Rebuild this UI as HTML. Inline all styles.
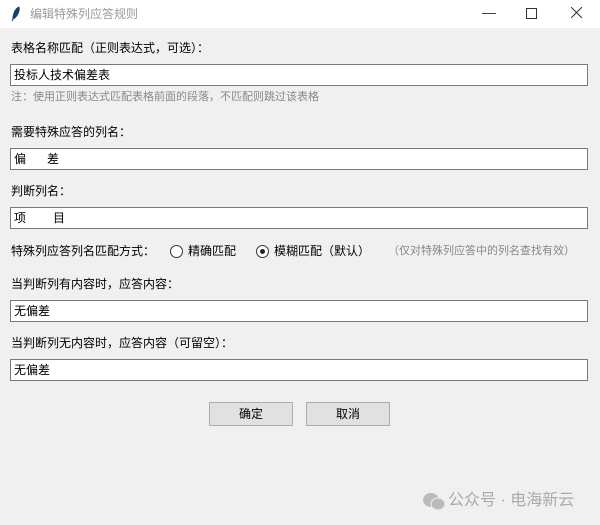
<!DOCTYPE html><html><head><meta charset="utf-8"><style>
body{margin:0;width:600px;height:525px;background:#f0f0f0;font-family:"Liberation Sans","Noto Sans CJK SC",sans-serif;font-size:12px;color:#000;position:relative;overflow:hidden}
.a{position:absolute;white-space:pre;line-height:16px}
.e{position:absolute;left:10px;width:578px;height:22px;background:#fff;border:1px solid #7a7a7a;box-sizing:border-box}
.e span{position:absolute;left:3px;top:2px;line-height:16px;white-space:pre}
.b{position:absolute;top:402px;width:84px;height:24px;box-sizing:border-box;border:1px solid #adadad;background:#e1e1e1;text-align:center;line-height:22px}
.r{position:absolute;width:13px;height:13px;border:1px solid #333;border-radius:50%;box-sizing:border-box;background:#fff}
</style></head><body>
<div style="position:absolute;left:0;top:0;width:600px;height:28px;background:#fff"></div>
<svg style="position:absolute;left:11px;top:6px" width="10" height="16" viewBox="0 0 10 16"><path d="M8 1C4 3 2 8 2 13L1 15M8 1C9 5 6 11 2 13" fill="#1a3f6e" stroke="#1a3f6e" stroke-width="1"/></svg>
<div class="a" style="left:30px;top:6px;color:#999;font-size:12px">编辑特殊列应答规则</div>
<div class="a" style="left:482px;top:4px;color:#333;font-size:14px">—</div>
<div style="position:absolute;left:526px;top:8px;width:9px;height:9px;border:1px solid #333"></div>
<svg style="position:absolute;left:571px;top:7px" width="11" height="11" viewBox="0 0 11 11"><path d="M0 0L11 11M11 0L0 11" stroke="#333" stroke-width="1"/></svg>
<div class="a" style="left:11px;top:40px">表格名称匹配（正则表达式，可选）：</div>
<div class="e" style="top:64px"><span>投标人技术偏差表</span></div>
<div class="a" style="left:11px;top:89px;color:#888;font-size:11px">注：使用正则表达式匹配表格前面的段落，不匹配则跳过该表格</div>
<div class="a" style="left:11px;top:124px">需要特殊应答的列名：</div>
<div class="e" style="top:148px"><span>偏<span style="position:static;display:inline-block;width:21px"></span>差</span></div>
<div class="a" style="left:11px;top:183px">判断列名：</div>
<div class="e" style="top:207px"><span>项<span style="position:static;display:inline-block;width:27px"></span>目</span></div>
<div class="a" style="left:11px;top:243px">特殊列应答列名匹配方式：</div>
<div class="r" style="left:170px;top:245px"></div>
<div class="a" style="left:188px;top:243px">精确匹配</div>
<div class="r" style="left:256px;top:245px"><div style="position:absolute;left:3px;top:3px;width:5px;height:5px;border-radius:50%;background:#222"></div></div>
<div class="a" style="left:274px;top:243px">模糊匹配（默认）</div>
<div class="a" style="left:388px;top:243px;color:#888;font-size:11px">（仅对特殊列应答中的列名查找有效）</div>
<div class="a" style="left:11px;top:276px">当判断列有内容时，应答内容：</div>
<div class="e" style="top:300px"><span>无偏差</span></div>
<div class="a" style="left:11px;top:335px">当判断列无内容时，应答内容（可留空）：</div>
<div class="e" style="top:359px"><span>无偏差</span></div>
<div class="b" style="left:209px">确定</div>
<div class="b" style="left:306px">取消</div>
<svg style="position:absolute;left:422px;top:492px" width="24" height="20" viewBox="0 0 24 20"><ellipse cx="9" cy="8" rx="8" ry="7" fill="#bbb"/><ellipse cx="16" cy="12" rx="7" ry="6" fill="#bbb" stroke="#f0f0f0" stroke-width="1"/></svg>
<div class="a" style="left:448px;top:491px;color:#aaa;font-size:16px;line-height:20px">公众号 · 电海新云</div>
</body></html>
